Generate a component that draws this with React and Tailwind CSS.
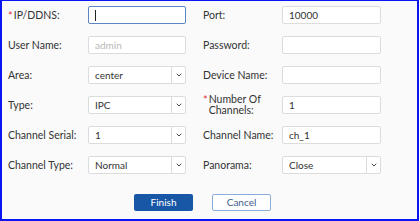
import { ChevronDown } from "lucide-react";

const font = { fontFamily: "Lato, 'Liberation Sans', sans-serif" };

function Label({ required, children }) {
  return (
    <div className="flex h-[18px] items-center text-[10.5px] leading-[11px] text-[#333]">
      <div className="flex items-start">
        {required && (
          <span className="mr-[1px] text-[11px] leading-[11px] text-[#e0383e]">*</span>
        )}
        <span>{children}</span>
      </div>
    </div>
  );
}

function TextBox({ value, placeholder, focused }) {
  return (
    <div
      className={
        "flex h-[18px] items-center rounded-[2px] border bg-white pl-[6px] text-[10px] " +
        (focused ? "border-[#5b86c5]" : "border-[#dcdcdc]")
      }
    >
      {focused && <span className="h-[11px] w-px bg-[#222]" />}
      {value && <span className="text-[#333]">{value}</span>}
      {placeholder && <span className="text-[#b8b8b8]">{placeholder}</span>}
    </div>
  );
}

function SelectBox({ value }) {
  return (
    <div className="flex h-[18px] items-stretch rounded-[2px] border border-[#dcdcdc] bg-white text-[10px] text-[#333]">
      <span className="flex flex-1 items-center pl-[6px]">{value}</span>
      <span className="flex w-[14px] items-center justify-center border-l border-[#dcdcdc]">
        <ChevronDown size={8} strokeWidth={2.75} className="text-[#3a3a3a]" />
      </span>
    </div>
  );
}

const rows = [
  [
    { label: "IP/DDNS:", required: true, field: <TextBox focused /> },
    { label: "Port:", field: <TextBox value="10000" /> },
  ],
  [
    { label: "User Name:", field: <TextBox placeholder="admin" /> },
    { label: "Password:", field: <TextBox /> },
  ],
  [
    { label: "Area:", field: <SelectBox value="center" /> },
    { label: "Device Name:", field: <TextBox /> },
  ],
  [
    { label: "Type:", field: <SelectBox value="IPC" /> },
    {
      label: (
        <>
          Number Of
          <br />
          Channels:
        </>
      ),
      required: true,
      field: <TextBox value="1" />,
    },
  ],
  [
    { label: "Channel Serial:", field: <SelectBox value="1" /> },
    { label: "Channel Name:", field: <TextBox value="ch_1" /> },
  ],
  [
    { label: "Channel Type:", field: <SelectBox value="Normal" /> },
    { label: "Panorama:", field: <SelectBox value="Close" /> },
  ],
];

export default function App() {
  return (
    <div
      className="h-[221px] w-[419px] border-x-2 border-b-2 border-t border-[#0a14f5] bg-[#fafafa] pl-[6px] pt-[5px]"
      style={font}
    >
      <div className="grid grid-cols-[80px_98px_17px_79px_99px] gap-y-[12px]">
        {rows.map((row, i) => (
          <div key={i} className="contents">
            <Label required={row[0].required}>{row[0].label}</Label>
            {row[0].field}
            <div />
            <Label required={row[1].required}>{row[1].label}</Label>
            {row[1].field}
          </div>
        ))}
      </div>
      <div className="mt-[20px] flex gap-[19px] pl-[126px]">
        <button className="h-[17px] w-[59px] rounded-[2px] bg-[#1856a6] text-[10px] text-white">
          Finish
        </button>
        <button className="h-[17px] w-[59px] rounded-[2px] border border-[#8aaedc] bg-white text-[10px] text-[#3d5b8c]">
          Cancel
        </button>
      </div>
    </div>
  );
}
